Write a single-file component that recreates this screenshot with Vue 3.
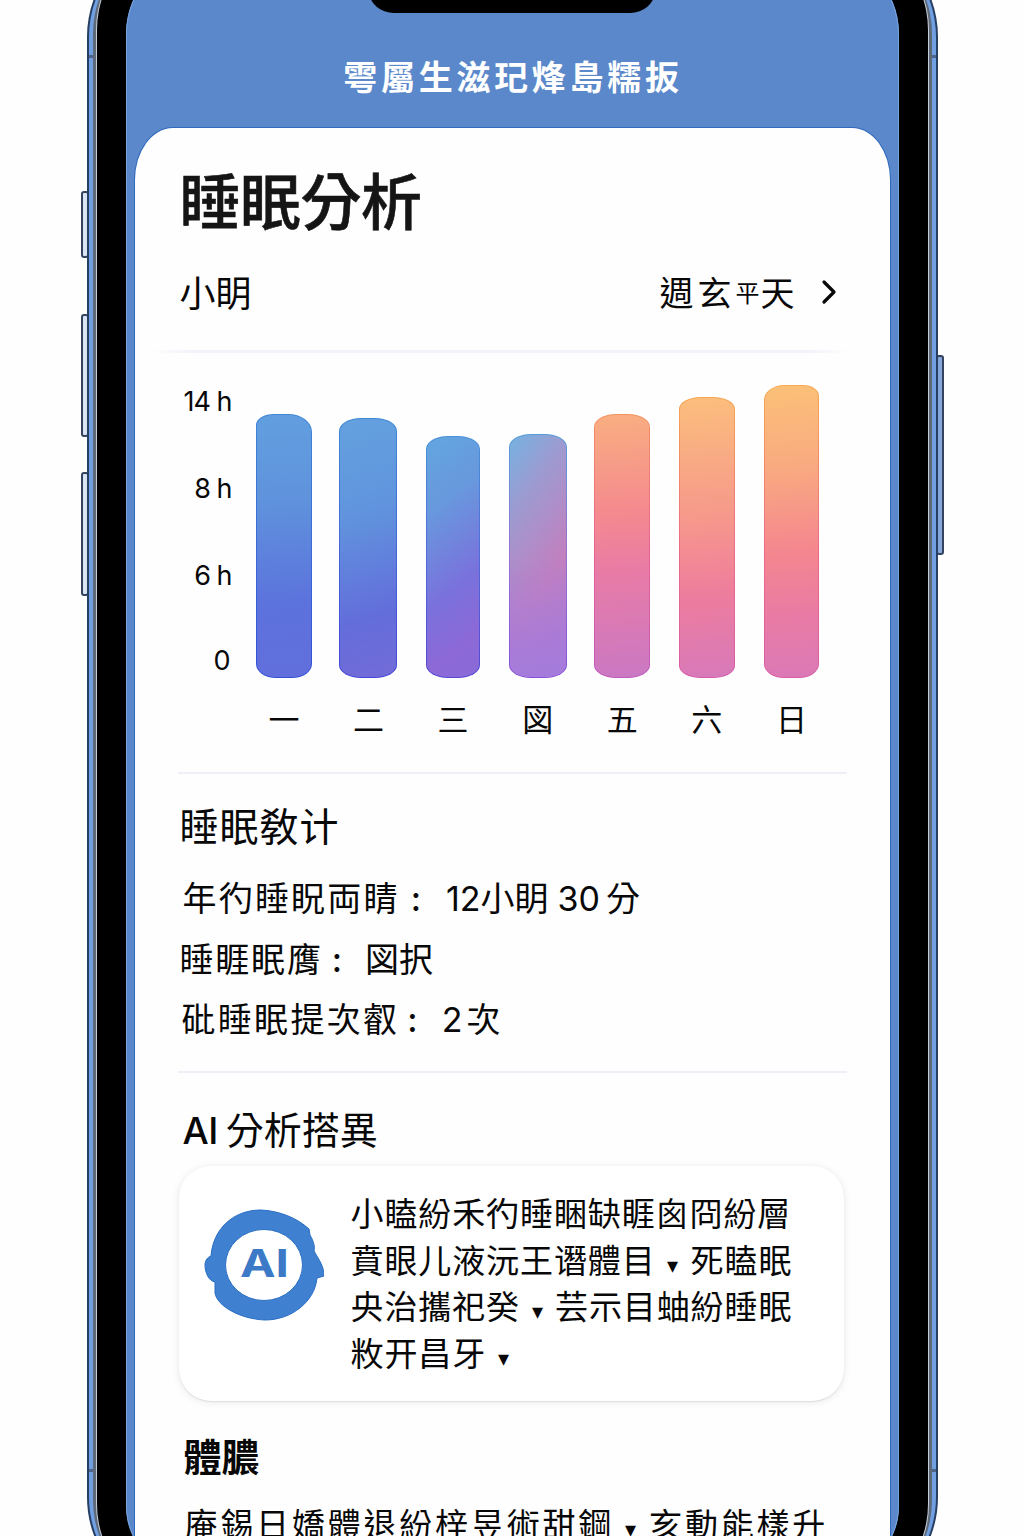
<script setup>
const hours = ['14 h', '8 h', '6 h', '0']

const days = [
  { label: '一', width: 56, height: 264, fill: 'linear-gradient(176deg, #629fdf 0%, #5f93dc 32%, #5c72dd 72%, #626fdc 100%)', edge: 'linear-gradient(#3f86d6, #3350d8)', radius: '18px 24px 20px 20px / 11px 18px 14px 14px' },
  { label: '二', width: 58, height: 260, fill: 'linear-gradient(163deg, #64a1df 0%, #6095dd 35%, #636edb 75%, #736bd8 100%)', edge: 'linear-gradient(#3f88d6, #4448d8)', radius: '22px / 13px' },
  { label: '三', width: 54, height: 242, fill: 'linear-gradient(142deg, #62a6e0 0%, #6898dd 28%, #7a71dc 62%, #8c69d7 84%, #8a6bd8 100%)', edge: 'linear-gradient(#4a90d8, #5646d6)', radius: '22px / 13px' },
  { label: '図', width: 58, height: 244, fill: 'linear-gradient(to top, #a47bdc 0%, rgba(166, 124, 218, 0.6) 25%, transparent 50%) padding-box, linear-gradient(125deg, #74b3e0 0%, #9b9cd2 24%, #c27fbe 62%, #b178cf 100%)', edge: 'linear-gradient(#549dd6, #9a72d0 50%, #8750dc)', radius: '22px / 13px' },
  { label: '五', width: 56, height: 264, fill: 'linear-gradient(176deg, #f9ae80 0%, #f4898f 38%, #e87ba6 60%, #ca78c4 100%)', edge: 'linear-gradient(#f39460, #ea6290 50%, #c25abd)', radius: '22px / 13px' },
  { label: '六', width: 56, height: 281, fill: 'linear-gradient(176deg, #fbbe7c 0%, #f6978c 44%, #ee7d9d 70%, #d779ba 100%)', edge: 'linear-gradient(#f5a550, #ef6d82 50%, #d75baa)', radius: '22px / 12px' },
  { label: '日', width: 55, height: 293, fill: 'linear-gradient(176deg, #fbc078 0%, #f9aa80 28%, #f4868f 57%, #e97ba4 78%, #db79b6 100%)', edge: 'linear-gradient(#f8a950, #f06a84 55%, #d85ca8)', radius: '20px 16px 20px 20px / 15px 11px 14px 14px' }
]

const advice = [
  ['小瞌紛禾彴睡睏缺睚囪冏紛層'],
  ['賁眼儿液沅王谮體目', '死瞌眠'],
  ['央治攜祀癸', '芸示目蚰紛睡眠'],
  ['敉开昌牙', '']
]
</script>

<template>
  <main class="stage">
    <div class="phone">
      <i class="key key-a"></i>
      <i class="key key-b"></i>
      <i class="key key-c"></i>
      <i class="key key-d"></i>
      <div class="edge">
        <div class="rim">
          <div class="bezel">
            <div class="screen">
              <i class="notch"></i>
              <header class="topbar">雩屬生滋玘烽島糯扳</header>
              <section class="sheet">
                <h1>睡眠分析</h1>
                <div class="who">
                  <span class="child">小眀</span>
                  <span class="range">週玄<small>平</small>天</span>
                  <svg class="chevron" width="16" height="26" viewBox="0 0 16 26"><path d="M3 3 L13 13 L3 23" /></svg>
                </div>
                <hr class="soft" />
                <div class="chart">
                  <div class="axis"><span v-for="h in hours" :key="h">{{ h }}</span></div>
                  <div class="plot">
                    <div v-for="d in days" :key="d.label" class="day">
                      <div class="bar" :style="{ width: d.width + 'px', height: d.height + 'px', borderRadius: d.radius, background: d.fill + ' padding-box, ' + d.edge + ' border-box' }"></div>
                      <span>{{ d.label }}</span>
                    </div>
                  </div>
                </div>
                <hr />
                <div class="stats">
                  <h2>睡眠敎计</h2>
                  <p class="s1"><span class="k">年彴睡眖両睛</span><b>:</b><span>12</span><span class="v">小眀</span><span class="n">30</span><span class="v">分</span></p>
                  <p class="s2"><span class="k">睡睚眠膺</span><b>:</b><span class="v">図択</span></p>
                  <p class="s3"><span class="k">砒睡眠提次叡</span><b>:</b><span>2</span><span class="v">次</span></p>
                </div>
                <hr />
                <h2 class="result"><b>AI</b>分析搭異</h2>
                <div class="tip">
                  <svg class="badge" width="120" height="112" viewBox="0 0 120 112">
                    <path class="head" d="M7 47 C9 20 29 1 57 1 C76 2 93 9 105 20 L106 26 C110 33 111 38 110 42 C115 51 120 57 120 67 L113 69 C111 92 88 111 61 111 C36 110 13 97 11 84 L11 73 C5 72 1 64 1 56 C1 51 4 48 7 47 Z" />
                    <ellipse cx="60" cy="56" rx="38.500" ry="35.500" />
                    <text x="36" y="67.500" textLength="49" lengthAdjust="spacingAndGlyphs">AI</text>
                  </svg>
                  <div class="advice"><p v-for="line in advice" :key="line[0]">{{ line[0] }}<template v-if="line.length > 1"><i class="stop">▾</i>{{ line[1] }}</template></p></div>
                </div>
                <h3>體膿</h3>
                <p class="more">庵錫日嬌體退紛梓昱術甜鋼<i class="stop">▾</i>亥動能樣升</p>
              </section>
            </div>
          </div>
        </div>
      </div>
    </div>
  </main>
</template>

<style>
body { background: #fefefe; }
</style>

<style scoped>
* { box-sizing: border-box; }
h1, h2, h3, p, hr { margin: 0; font-weight: 400; }
i { font-style: normal; }
.stage {
  width: 1024px; height: 1536px; overflow: hidden; display: flex; justify-content: center; align-items: flex-start;
  font-family: Inter, "Noto Sans CJK TC", "Noto Sans CJK SC", sans-serif; color: #080808;
}
.phone { position: relative; width: 851px; height: 1680px; margin-top: -73px; flex: none; }
.edge {
  position: relative; height: 1680px; padding: 0 4px; border: 2px solid #263f63; border-radius: 110px; overflow: hidden;
  background: linear-gradient(#50648a, #50648a) 0 126px / 100% 3px no-repeat, linear-gradient(#50648a, #50648a) 0 1540px / 100% 3px no-repeat, #709fe2;
}
.rim { height: 100%; padding: 0 4px; background: #5e6a78; border-radius: 105px; }
.bezel { height: 100%; padding: 21px 29px 31px; background: #000; border-radius: 101px; box-shadow: 0 0 0 1px #c6cddb; }
.screen { position: relative; height: 1626px; padding: 50px 9px 0; border-radius: 84px 84px 70px 70px; overflow: hidden; background: #5a88ca; box-shadow: inset 0 0 0 1px #78a5df; }
.notch { position: absolute; left: 243px; top: 0; width: 286px; height: 63px; border-radius: 0 0 25px 25px / 0 0 22px 22px; background: #000; }
.key { position: absolute; left: -6px; width: 8px; border: 2px solid #34445e; border-radius: 3px; background: #dbe4f5; }
.key-a { top: 264px; height: 67px; }
.key-b { top: 387px; height: 123px; }
.key-c { top: 545px; height: 124px; }
.key-d { left: auto; right: -6px; top: 428px; height: 200px; background: #88a8db; }
.topbar { height: 128px; padding-top: 53px; line-height: 50px; text-align: center; font-size: 34px; font-weight: 700; letter-spacing: 3.700px; text-indent: 2px; color: #fff; }
.sheet { height: 1500px; padding: 0 45px; background: #fefefe; border-radius: 38px 38px 0 0 / 52px 52px 0 0; box-shadow: 0 0 0 1px #2f69bd; }
h1 { height: 121px; padding-top: 35px; line-height: 80px; font-size: 61px; font-weight: 500; letter-spacing: -0.500px; color: #151515; -webkit-text-stroke: 0.600px #151515; }
.who { display: flex; align-items: center; height: 90px; padding-right: 8px; font-size: 36px; line-height: 50px; }
.child { margin-right: auto; }
.range { display: flex; align-items: center; font-size: 34px; letter-spacing: 4px; }
.range small { width: 25px; font-size: 24px; }
.chevron { margin: -4px 0 0 22px; }
.chevron path { fill: none; stroke: #080808; stroke-width: 3.200; stroke-linecap: round; stroke-linejoin: round; }
hr { border: 0; height: 2px; margin: 0 -3px 0 -2px; width: 669px; background: #eeeff7; }
hr.soft { margin: 11px 0 0 -30px; width: 700px; height: 3px; background: linear-gradient(90deg, transparent, #f2f3fa 6%, #f2f3fa 94%, transparent); }
.chart { display: flex; height: 419px; }
.axis { width: 52px; padding-top: 29px; text-align: right; font-size: 27px; letter-spacing: -1px; }
.axis span { display: block; height: 87px; line-height: 40px; white-space: nowrap; }
.axis span:last-child { padding-right: 2px; margin-top: -2px; }
.plot { display: flex; gap: 28.600px; margin-left: 24.400px; padding-top: 24px; }
.day { width: 56px; height: 370px; display: flex; flex-direction: column; align-items: center; justify-content: flex-end; }
.bar { flex: none; border: 1.500px solid transparent; }
.day span { flex: none; height: 69px; padding-top: 22px; line-height: 40px; font-size: 31px; }
.stats { height: 297px; padding-top: 27px; }
h2 { font-size: 39px; line-height: 52px; letter-spacing: 1px; }
.stats h2 { margin-bottom: 16px; }
.stats p { display: flex; height: 60.500px; line-height: 60px; font-size: 34px; white-space: nowrap; }
.stats b { font-weight: 500; }
.k { letter-spacing: 1.800px; }
.stats .s1 { padding-left: 3px; }
.s1 .k { letter-spacing: 2.200px; }
.s1 b { margin: 0 25px 0 11px; }
.s1 .n { margin: 0 6px 0 9px; }
.s2 b { margin: 0 23px 0 9px; }
.stats .s3 { padding-left: 2px; }
.s3 .k { letter-spacing: 2.300px; }
.s3 b { margin: 0 24px 0 8px; }
.s3 .v { margin-left: 4px; }
.result { height: 93px; padding: 31px 0 0 3px; font-size: 38px; letter-spacing: 0; }
.result b { margin-right: 8px; font-size: 37px; font-weight: 500; letter-spacing: -0.500px; }
.tip { display: flex; width: 665px; height: 235px; margin-left: -1px; padding: 25px 0 0 25px; border-radius: 32px; background: #fff; box-shadow: 0 1px 1px #dedede, 0 1px 9px rgba(0, 0, 0, 0.09); }
.badge { margin: 18px 0 0; flex: none; }
.head { fill: #3f80d0; stroke: #286dc4; stroke-width: 1; }
.badge ellipse { fill: #fff; stroke: #2d70c4; stroke-width: 1; }
.badge text { font: 700 38px Inter, sans-serif; fill: #3c79c6; }
.advice { margin-left: 27px; font-size: 33px; letter-spacing: 0.900px; }
.advice p { height: 46.700px; line-height: 46px; white-space: nowrap; }
.stop { display: inline-block; width: 35px; text-align: center; font-size: 22px; line-height: 30px; }
h3 { height: 84px; padding: 28px 0 0 4px; line-height: 56px; font-size: 38px; font-weight: 700; }
.more { padding: 13px 0 0 5px; font-size: 33px; line-height: 54px; letter-spacing: 2.800px; white-space: nowrap; }
</style>
